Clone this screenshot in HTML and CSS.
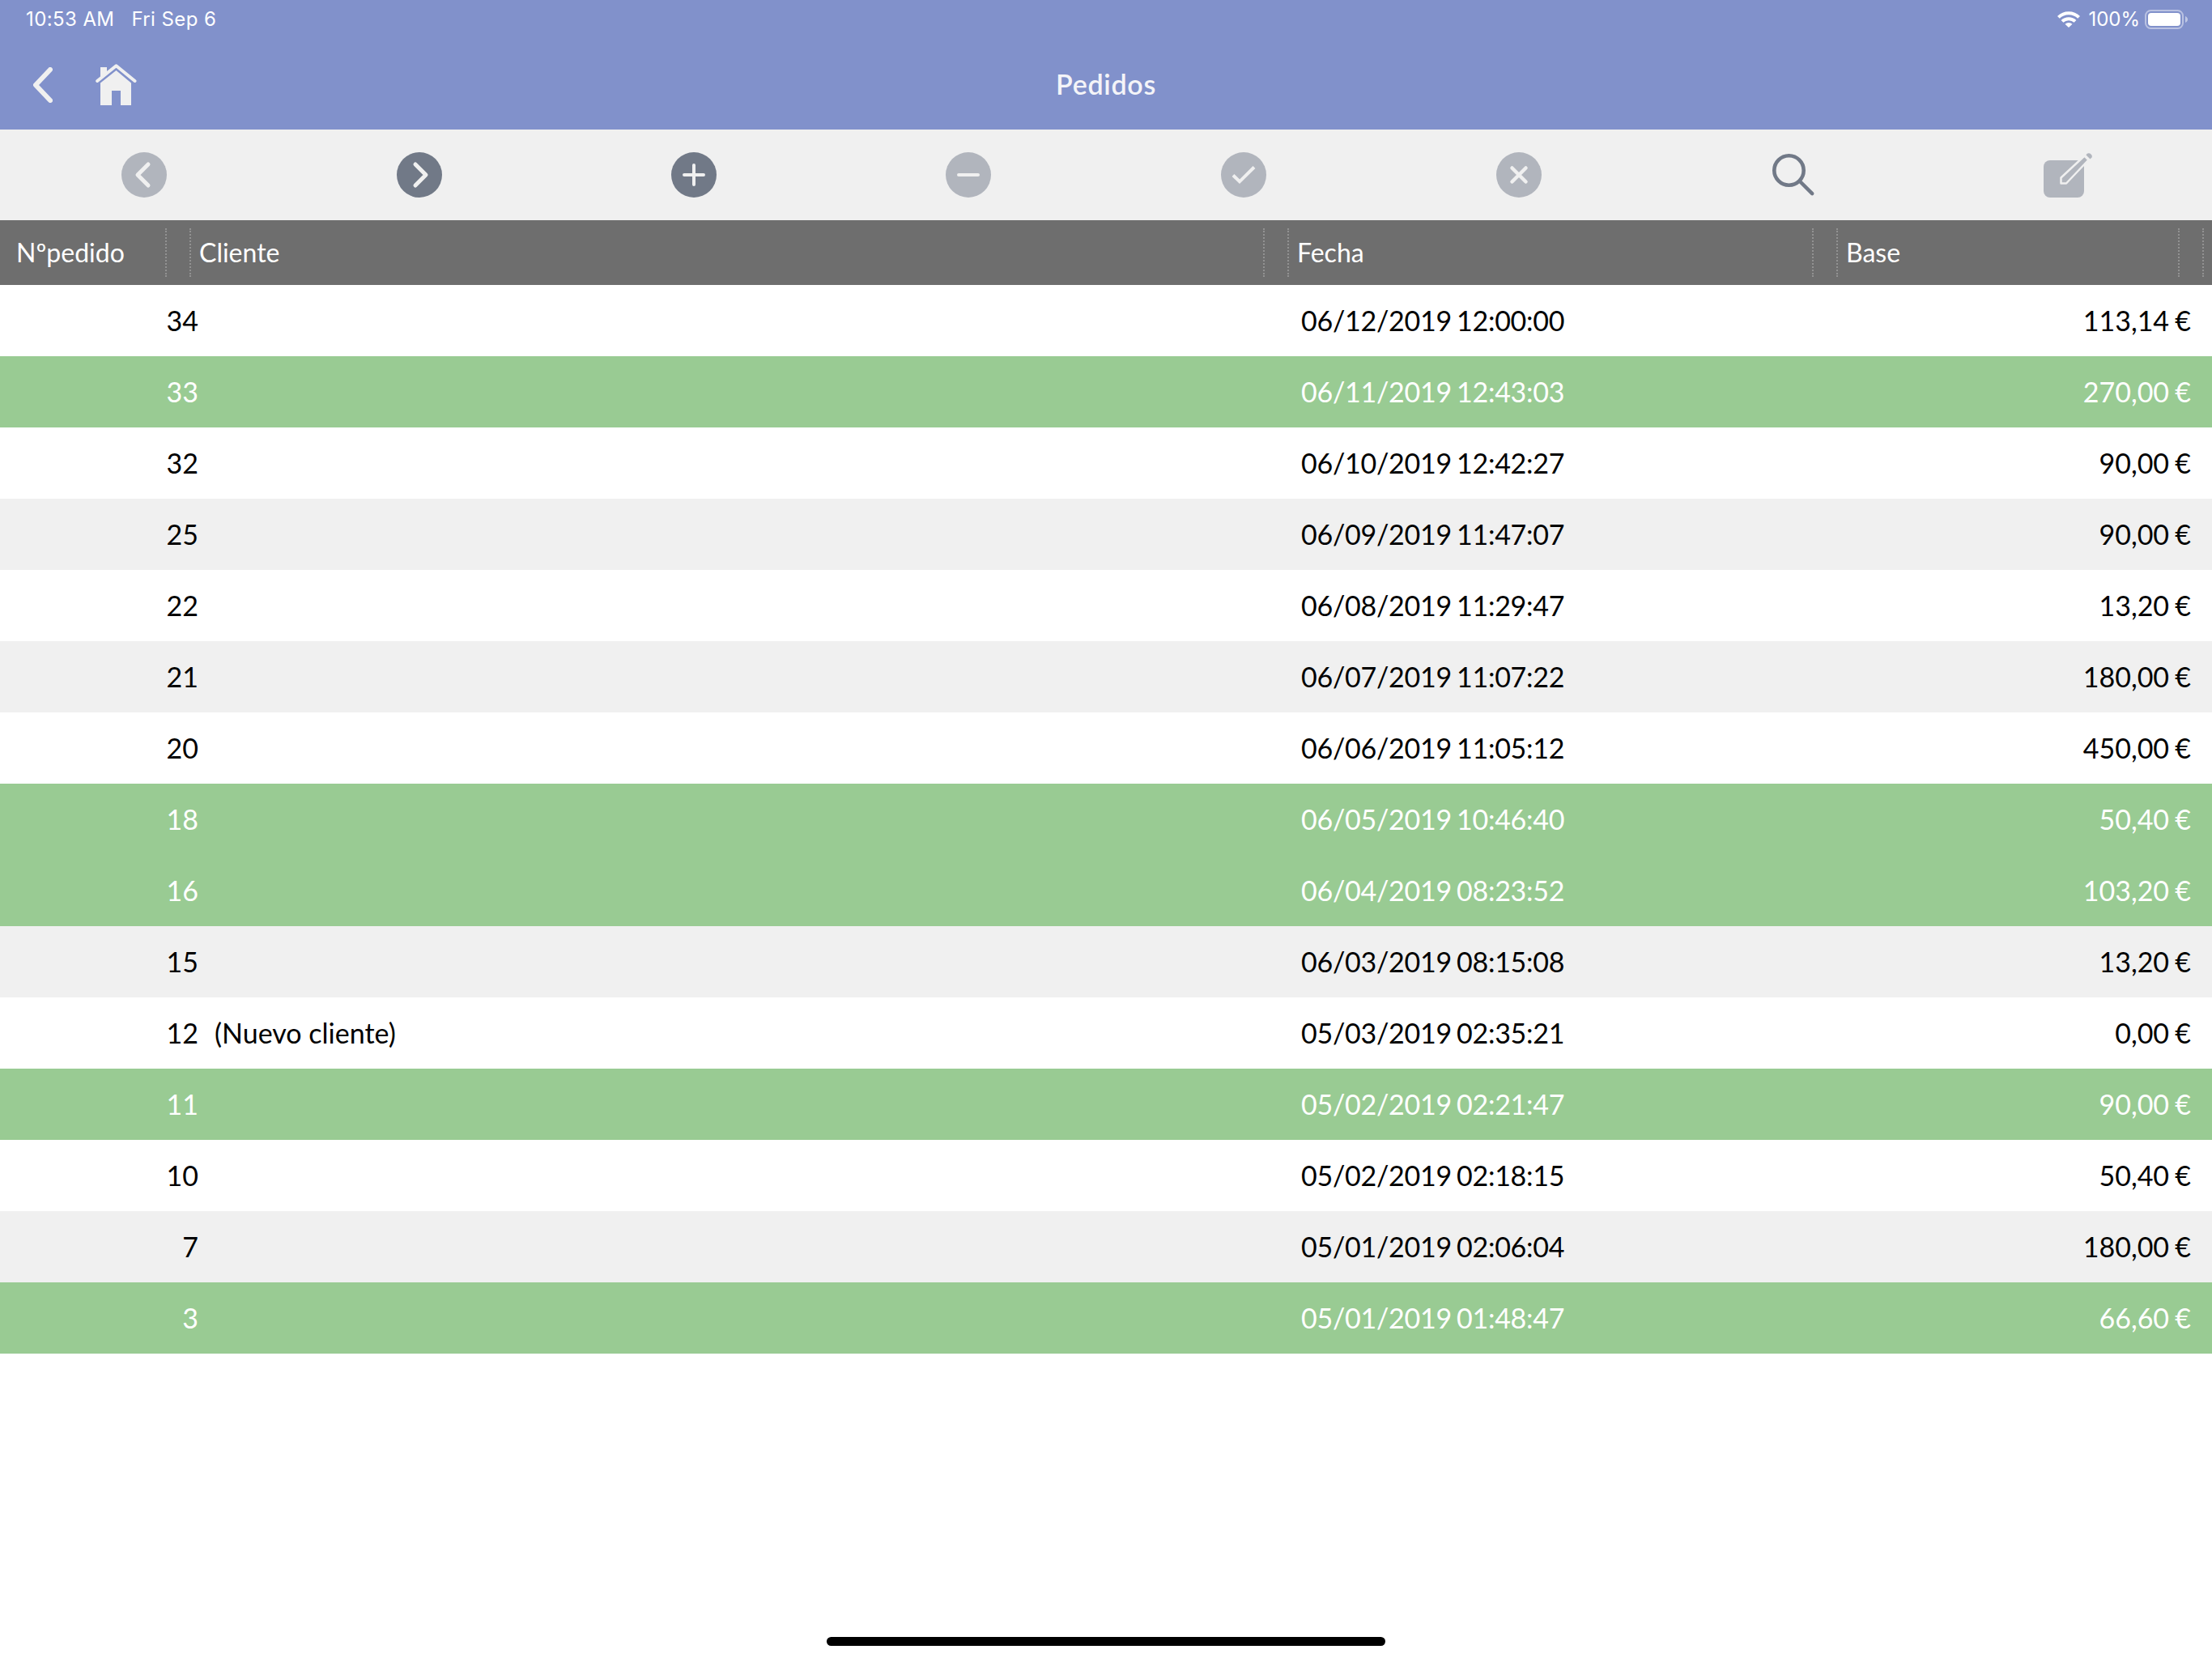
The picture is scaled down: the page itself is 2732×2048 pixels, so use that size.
FILE: index.html
```html
<!DOCTYPE html>
<html lang="es">
<head>
  <meta charset="UTF-8">
  <meta name="viewport" content="width=device-width, initial-scale=1.0">
  <title>Pedidos</title>
  <link rel="stylesheet" href="styles.css">
</head>
<body>
  <header class="header">
    <div class="status-bar">
      <span class="time">10:53 AM</span>
      <span class="date">Fri Sep 6</span>
      <svg class="wifi" viewBox="0 0 28 20">
        <g fill="none" stroke="#fff" stroke-width="4">
          <path d="M1.4 7.4a18 18 0 0 1 25.2 0"/>
          <path d="M6 12.4a11.6 11.6 0 0 1 16 0"/>
        </g>
        <path d="M9.5 15.8a6.4 6.4 0 0 1 9 0L14 20z" fill="#fff"/>
      </svg>
      <span class="percent">100%</span>
      <svg class="battery" viewBox="0 0 54 24">
        <rect x="1" y="1" width="46" height="22" rx="6.5" fill="none" stroke="#fff" stroke-opacity=".45" stroke-width="2"/>
        <rect x="4" y="4" width="40" height="16" rx="4" fill="#fff"/>
        <path d="M50 8c4 1.5 4 6.5 0 8z" fill="#fff" fill-opacity=".5"/>
      </svg>
    </div>
    <nav class="nav-bar">
      <div class="nav-icons">
        <svg class="back" viewBox="0 0 24 44"><path d="M21 3L3 22l18 19"/></svg>
        <svg class="home" viewBox="0 0 52 52">
          <path d="M6 4h8v7.5L6 18.5z"/>
          <path d="M2.2 21L25.5 2.2 48.5 21" fill="none" stroke="#f0f0f0" stroke-width="4" stroke-linecap="round" stroke-linejoin="round"/>
          <path d="M6 23.5L25.500 8l18.500 15.500V51H31V33H20v18H6z"/>
        </svg>
      </div>
      <h1>Pedidos</h1>
    </nav>
  </header>

  <div class="toolbar">
    <a class="tool disabled"><svg viewBox="0 0 56 56"><circle cx="28" cy="28" r="28"/><path d="M33 15L20 28l13 13" stroke-width="5"/></svg></a>
    <a class="tool"><svg viewBox="0 0 56 56"><circle cx="28" cy="28" r="28"/><path d="M23 15l13 13-13 13" stroke-width="5"/></svg></a>
    <a class="tool"><svg viewBox="0 0 56 56"><circle cx="28" cy="28" r="28"/><path d="M28 16v24M16 28h24" stroke-width="4"/></svg></a>
    <a class="tool disabled"><svg viewBox="0 0 56 56"><circle cx="28" cy="28" r="28"/><path d="M16 28h24" stroke-width="4"/></svg></a>
    <a class="tool disabled check"><svg viewBox="0 0 56 56"><circle cx="28" cy="28" r="28"/><path d="M15 28.5l8 7.8L41 18.5" stroke-width="4"/></svg></a>
    <a class="tool disabled"><svg viewBox="0 0 56 56"><circle cx="28" cy="28" r="28"/><path d="M19.5 19.5l17 17M36.5 19.5l-17 17" stroke-width="4.5"/></svg></a>
    <a class="tool search"><svg viewBox="0 0 56 56"><circle cx="22.5" cy="22.5" r="18.2"/><path d="M36 36l15.2 15.2" stroke-width="4.5"/></svg></a>
    <a class="tool disabled edit"><svg viewBox="0 0 60 56">
      <rect x="0" y="10" width="50" height="46" rx="8"/>
      <path class="pencil" d="M21.5 31.5L50.5 4.5l5 5L28 38.5h-6.5z"/>
      <path class="tip" d="M52.5 3.5c2-5 9-1 7 3l-2 2z"/>
    </svg></a>
  </div>

  <div class="table-head">
    <div class="col">Nºpedido</div>
    <div class="col">Cliente</div>
    <div class="col">Fecha</div>
    <div class="col">Base</div>
  </div>

  <div class="rows">
    <div class="row"><span>34</span><span></span><span>06/12/2019 12:00:00</span><span>113,14 €</span></div>
    <div class="row done"><span>33</span><span></span><span>06/11/2019 12:43:03</span><span>270,00 €</span></div>
    <div class="row"><span>32</span><span></span><span>06/10/2019 12:42:27</span><span>90,00 €</span></div>
    <div class="row"><span>25</span><span></span><span>06/09/2019 11:47:07</span><span>90,00 €</span></div>
    <div class="row"><span>22</span><span></span><span>06/08/2019 11:29:47</span><span>13,20 €</span></div>
    <div class="row"><span>21</span><span></span><span>06/07/2019 11:07:22</span><span>180,00 €</span></div>
    <div class="row"><span>20</span><span></span><span>06/06/2019 11:05:12</span><span>450,00 €</span></div>
    <div class="row done"><span>18</span><span></span><span>06/05/2019 10:46:40</span><span>50,40 €</span></div>
    <div class="row done"><span>16</span><span></span><span>06/04/2019 08:23:52</span><span>103,20 €</span></div>
    <div class="row"><span>15</span><span></span><span>06/03/2019 08:15:08</span><span>13,20 €</span></div>
    <div class="row"><span>12</span><span>(Nuevo cliente)</span><span>05/03/2019 02:35:21</span><span>0,00 €</span></div>
    <div class="row done"><span>11</span><span></span><span>05/02/2019 02:21:47</span><span>90,00 €</span></div>
    <div class="row"><span>10</span><span></span><span>05/02/2019 02:18:15</span><span>50,40 €</span></div>
    <div class="row"><span>7</span><span></span><span>05/01/2019 02:06:04</span><span>180,00 €</span></div>
    <div class="row done"><span>3</span><span></span><span>05/01/2019 01:48:47</span><span>66,60 €</span></div>
  </div>

  <div class="home-indicator"></div>
</body>
</html>
```
FILE: styles.css
```css
* {
  box-sizing: border-box;
}
body {
  margin: 0;
  height: 2048px;
  display: flex;
  flex-direction: column;
  overflow: hidden;
  background-color: #fff;
  color: #000;
  font-family: Lato, sans-serif;
  font-size: 34px;
}
svg {
  display: block;
  flex: none;
}

/* header */
.header {
  height: 160px;
  background-color: #8191cb;
  color: #fff;
}
.status-bar {
  display: flex;
  align-items: center;
  height: 48px;
  padding: 0 29px 0 32px;
  font-family: Inter, sans-serif;
  font-size: 24px;
  line-height: 48px;
  letter-spacing: 0.4px;
}
.date {
  margin-left: 21px;
}
.wifi {
  width: 28px;
  height: 20px;
  margin-left: auto;
}
.percent {
  margin-left: 10px;
  letter-spacing: 0;
}
.battery {
  width: 54px;
  height: 24px;
  margin-left: 6px;
}
.nav-bar {
  display: grid;
  grid-template-columns: 1fr auto 1fr;
  align-items: center;
  height: 112px;
}
.nav-icons {
  display: flex;
  align-items: center;
  padding-left: 41px;
  gap: 53px;
}
.back {
  width: 24px;
  height: 44px;
  margin-top: 2px;
  fill: none;
  stroke: #f0f0f0;
  stroke-width: 6;
  stroke-linecap: round;
  stroke-linejoin: round;
}
.home {
  width: 52px;
  height: 52px;
  margin-top: 2px;
  fill: #f0f0f0;
}
h1 {
  margin: 0 0 2px;
  font-size: 34px;
  font-weight: 600;
  letter-spacing: 0.7px;
  color: #f4f4f8;
}

/* toolbar */
.toolbar {
  display: grid;
  grid-template-columns: 340px 340px 338px 340px 340px 340px 338px 340px;
  height: 112px;
  padding: 0 8px;
  background-color: #f0f0f0;
}
.tool {
  display: flex;
  align-items: center;
  justify-content: center;
}
.tool svg {
  width: 56px;
  height: 56px;
  fill: #717987;
}
.tool path {
  fill: none;
  stroke: #f0f0f0;
  stroke-linecap: round;
  stroke-linejoin: round;
}
.tool.disabled svg {
  fill: #b1b5bd;
}
.tool.check path {
  stroke-linecap: butt;
  stroke-linejoin: miter;
}
.tool.search circle {
  fill: none;
  stroke: #717987;
  stroke-width: 4.6;
}
.tool.search path {
  stroke: #717987;
}
.tool.edit svg {
  width: 60px;
}
.tool .pencil {
  fill: #b1b5bd;
  stroke-width: 2.5;
}
.tool .tip {
  fill: #b1b5bd;
  stroke: none;
}

/* table */
.table-head,
.row {
  display: grid;
  grid-template-columns: 234px 1356px 678px 452px;
}
.table-head {
  height: 80px;
  padding: 10px 0;
  background-color: #6e6e6e;
  color: #fff;
  font-size: 32px;
  line-height: 60px;
}
.col {
  display: flex;
  justify-content: space-between;
  padding-left: 12px;
}
.col:first-child {
  padding-left: 20px;
}
/* column resize grip */
.col::after {
  content: "";
  width: 28px;
  margin-right: -2px;
  border: 2px dotted #929292;
  border-width: 0 2px;
}
.row {
  height: 88px;
  line-height: 88px;
  white-space: nowrap;
}
.row:nth-child(even) {
  background-color: #f0f0f0;
}
.row.done {
  background-color: #99cb93;
  color: #fff;
}
.row span:nth-child(1) {
  text-align: right;
  margin-right: -11px;
}
.row span:nth-child(2) {
  padding-left: 31px;
}
.row span:nth-child(3) {
  padding-left: 17px;
  letter-spacing: -0.25px;
  word-spacing: -2.5px;
}
.row span:nth-child(4) {
  text-align: right;
  margin-right: 14px;
  word-spacing: -1.5px;
}

.home-indicator {
  width: 690px;
  height: 11px;
  margin: auto auto 15px;
  border-radius: 6px;
  background-color: #000;
}
```
